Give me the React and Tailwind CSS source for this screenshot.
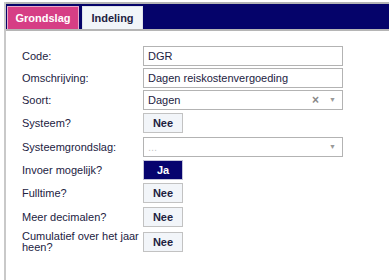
import React from 'react';

const font = { fontFamily: '"Liberation Sans", Arial, sans-serif' };

function Row({ label, children, className = '' }) {
  return (
    <div className={`flex items-center ${className}`}>
      <div className="w-[121px] pr-[2px] text-[11px] leading-[11px] text-[#22223f]">{label}</div>
      {children}
    </div>
  );
}

function TextInput({ value }) {
  return (
    <div className="w-[200px] h-[20px] border border-[#b3b3b3] bg-white px-[4px] flex items-center text-[11px] text-[#22223f]">
      {value}
    </div>
  );
}

function Select({ value, placeholder, clearable }) {
  return (
    <div className="w-[200px] h-[20px] border border-[#b3b3b3] bg-white pl-[4px] pr-[6px] flex items-center text-[11px]">
      {value ? (
        <span className="flex-1 text-[#22223f]">{value}</span>
      ) : (
        <span className="flex-1 text-[#c8c8c8]">{placeholder}</span>
      )}
      {clearable && <span className="text-[#888] text-[12px] font-bold mr-[10px]">×</span>}
      <span className="text-[#999] text-[7px]">▼</span>
    </div>
  );
}

function Toggle({ on }) {
  return on ? (
    <div className="w-[40px] h-[20px] bg-[#06036e] border border-[#c4c4d8] flex items-center justify-center text-[11px] font-bold text-white">
      Ja
    </div>
  ) : (
    <div className="w-[40px] h-[20px] bg-[#f2f5f9] border border-[#c2c2c2] flex items-center justify-center text-[11px] font-bold text-[#22223f]">
      Nee
    </div>
  );
}

export default function App() {
  return (
    <div className="w-[389px] h-[280px] bg-white overflow-hidden pt-[2px] pl-[4px]" style={font}>
      <div className="h-[278px] border-l-2 border-[#c9c9c9] flex flex-col">
        {/* Tab strip */}
        <div className="h-[29px] border-t-2 border-b-2 border-[#b5b5b5] bg-[#05036a] flex items-end gap-[3px] pl-[1px] pt-[3px]">
          <div className="h-[23px] w-[72px] bg-[#d63e85] border border-[#e9a9c8] border-b-0 flex items-center justify-center text-[11px] font-bold text-white">
            Grondslag
          </div>
          <div className="h-[23px] w-[61px] bg-[#f1f5f9] border border-[#dfe3ea] border-b-0 flex items-center justify-center text-[11px] font-bold text-[#22223f]">
            Indeling
          </div>
        </div>

        {/* Form */}
        <div className="pl-[16px] pt-[15px] flex flex-col">
          <Row label="Code:"><TextInput value="DGR" /></Row>
          <Row label="Omschrijving:" className="mt-[2px]"><TextInput value="Dagen reiskostenvergoeding" /></Row>
          <Row label="Soort:" className="mt-[2px]"><Select value="Dagen" clearable /></Row>
          <Row label="Systeem?" className="mt-[3px]"><Toggle /></Row>
          <Row label="Systeemgrondslag:" className="mt-[4px]"><Select placeholder="..." /></Row>
          <Row label="Invoer mogelijk?" className="mt-[3px]"><Toggle on /></Row>
          <Row label="Fulltime?" className="mt-[3px]"><Toggle /></Row>
          <Row label="Meer decimalen?" className="mt-[4px]"><Toggle /></Row>
          <Row label="Cumulatief over het jaar heen?" className="mt-[4px]"><Toggle /></Row>
        </div>
      </div>
    </div>
  );
}
